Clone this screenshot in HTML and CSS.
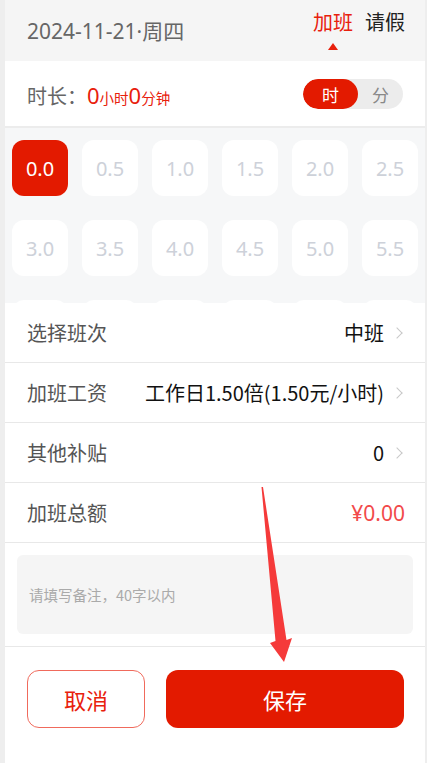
FILE: index.html
```html
<!DOCTYPE html>
<html lang="zh">
<head>
<meta charset="utf-8">
<link rel="stylesheet" href="styles.css">
</head>
<body>
<div class="page">
  <header class="head">
    <div class="date">2024-11-21·周四</div>
    <div class="tabs">
      <div class="tab active">加班<span class="tri"></span></div>
      <div class="tab">请假</div>
    </div>
  </header>
  <div class="dur">
    <div class="dur-label">时长：<span class="big">0</span><span class="sm">小时</span><span class="big">0</span><span class="sm">分钟</span></div>
    <div class="toggle"><span class="seg on">时</span><span class="seg">分</span></div>
  </div>
  <div class="grid-wrap">
    <div class="grid">
      <div class="chip sel">0.0</div><div class="chip">0.5</div><div class="chip">1.0</div><div class="chip">1.5</div><div class="chip">2.0</div><div class="chip">2.5</div>
      <div class="chip">3.0</div><div class="chip">3.5</div><div class="chip">4.0</div><div class="chip">4.5</div><div class="chip">5.0</div><div class="chip">5.5</div>
      <div class="chip"></div><div class="chip"></div><div class="chip"></div><div class="chip"></div><div class="chip"></div><div class="chip"></div>
    </div>
  </div>
  <div class="list">
    <div class="row"><span class="lbl">选择班次</span><span class="val">中班</span><span class="chev"></span></div>
    <div class="row"><span class="lbl">加班工资</span><span class="val">工作日1.50倍(1.50元/小时)</span><span class="chev"></span></div>
    <div class="row"><span class="lbl">其他补贴</span><span class="val">0</span><span class="chev"></span></div>
    <div class="row"><span class="lbl">加班总额</span><span class="val red">¥0.00</span></div>
  </div>
  <div class="remark-wrap">
    <div class="remark">请填写备注，40字以内</div>
  </div>
  <div class="btns">
    <div class="btn cancel">取消</div>
    <div class="btn save">保存</div>
  </div>
</div>
<svg class="arrow" width="427" height="763" viewBox="0 0 427 763">
  <polygon points="261.5,487 263,487 286.5,640 292,638 284,662 270,643 275.5,641" fill="#f53a3a"/>
</svg>
</body>
</html>
```
FILE: styles.css
```css
html, body { margin: 0; padding: 0; }
body {
  background: #eeeeee;
  font-family: "Noto Sans CJK SC", "Noto Sans", sans-serif;
  width: 427px;
  height: 763px;
  overflow: hidden;
  position: relative;
}
.page {
  margin-left: 5px;
  width: 420px;
  height: 763px;
  background: #fff;
  display: flex;
  flex-direction: column;
}
.head {
  height: 61px;
  background: #f5f5f5;
  display: flex;
  justify-content: space-between;
  align-items: flex-start;
  padding: 0 20px 0 22px;
}
.date {
  margin-top: 17px;
  font-size: 21px;
  line-height: 28px;
  color: #666;
  font-family: "Noto Sans", "Noto Sans CJK SC", sans-serif;
}
.tabs { display: flex; gap: 12px; margin-top: 8px; }
.tab {
  position: relative;
  font-size: 20px;
  line-height: 28px;
  color: #222;
}
.tab.active { color: #e8200c; }
.tri {
  position: absolute;
  left: 15px;
  top: 35px;
  width: 0; height: 0;
  border-left: 5px solid transparent;
  border-right: 5px solid transparent;
  border-bottom: 7px solid #e8200c;
}
.dur {
  height: 65px;
  display: flex;
  align-items: center;
  justify-content: space-between;
  padding: 0 22px;
  border-bottom: 2px solid #ececec;
}
.dur-label { font-size: 20px; color: #666; display: flex; align-items: baseline; margin-top: 3px; }
.big { color: #e8200c; font-size: 22px; font-family: "Noto Sans", sans-serif; }
.sm { color: #e8200c; font-size: 14.5px; }
.toggle {
  display: flex;
  width: 100px;
  height: 30px;
  border-radius: 15px;
  background: #ececec;
  overflow: hidden;
  margin-top: 1px;
}
.seg {
  width: 45px;
  display: flex; align-items: center; justify-content: center;
  font-size: 17px; color: #888;
}
.seg.on { width: 55px; background: #e31a00; color: #fff; border-radius: 15px; }
.grid-wrap {
  height: 175px;
  background: #f6f7f8;
  overflow: hidden;
}
.grid {
  display: grid;
  grid-template-columns: repeat(6, 56px);
  column-gap: 14px;
  row-gap: 24px;
  padding: 12px 0 0 7px;
}
.chip {
  height: 56px;
  border-radius: 12px;
  background: #fff;
  display: flex; align-items: center; justify-content: center;
  font-size: 20px;
  color: #cdd1d9;
  font-family: "Noto Sans", sans-serif;
}
.chip.sel { background: #e31a00; color: #fff; }
.list { display: flex; flex-direction: column; }
.row {
  height: 59px;
  display: flex;
  align-items: center;
  padding: 0 20px 0 22px;
  border-bottom: 1px solid #e8e8e8;
}
.lbl { font-size: 20px; color: #555; flex: 1; }
.val { font-size: 20px; color: #111; }
.val.red { color: #f24a4a; font-family: "Noto Sans", sans-serif; font-size: 21px; }
.chev {
  width: 7px; height: 7px;
  border-top: 1px solid #c8c8c8;
  border-right: 1px solid #c8c8c8;
  transform: rotate(45deg);
  margin-left: 9px;
  margin-right: 4px;
}
.remark-wrap {
  padding: 12px 12px 12px 12px;
  border-bottom: 1px solid #e8e8e8;
}
.remark {
  height: 79px;
  background: #f5f5f5;
  border-radius: 6px;
  display: flex; align-items: center;
  padding-left: 12px;
  font-size: 14.5px;
  color: #aaa;
}
.btns {
  display: flex;
  gap: 21px;
  padding: 23px 21px 0 22px;
}
.btn {
  height: 58px;
  border-radius: 12px;
  display: flex; align-items: center; justify-content: center;
  font-size: 22px;
  box-sizing: border-box;
}
.cancel { width: 118px; border: 1px solid #f06a5c; color: #e8200c; }
.save { flex: 1; background: #e31a00; color: #fff; }
.arrow { position: absolute; left: 0; top: 0; pointer-events: none; }
```
